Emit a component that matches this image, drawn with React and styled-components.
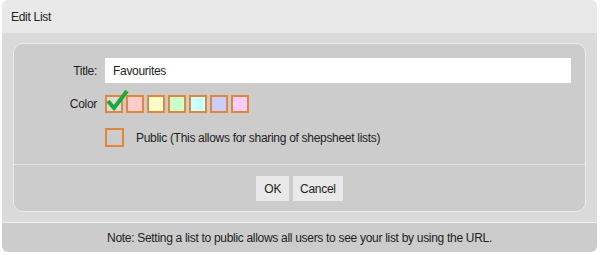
import React from "react";
import styled, { createGlobalStyle } from "styled-components";

const Global = createGlobalStyle`
  html, body { margin: 0; padding: 0; background: #ffffff; }
  body { font-family: "Liberation Sans", Arial, sans-serif; font-size: 12px; letter-spacing: -0.3px; color: #222; }
`;

const Dialog = styled.div`
  margin-left: 2px;
  width: 595px;
  display: flex;
  flex-direction: column;
  border-radius: 6px;
  overflow: hidden;
`;

const Header = styled.div`
  height: 33px;
  background: #e9e9e9;
  display: flex;
  align-items: center;
  padding-left: 9px;
  color: #222;
`;

const Body = styled.div`
  background: #dadada;
  padding: 10px 11px 10px 11px;
`;

const Panel = styled.div`
  background: #cccccc;
  border: 1px solid #ececec;
  border-radius: 10px;
  display: flex;
  flex-direction: column;
`;

const Form = styled.div`
  display: grid;
  grid-template-columns: 83px 1fr;
  column-gap: 8px;
  padding: 14px 14px 17px 0;
  align-items: center;
`;

const Label = styled.label`
  text-align: right;
  color: #222;
  margin-top: ${(p) => p.$mt || 0}px;
`;

const Input = styled.input`
  height: 25px;
  box-sizing: border-box;
  border: none;
  outline: none;
  background: #ffffff;
  padding: 0 8px;
  font-family: inherit;
  font-size: 12px;
  letter-spacing: inherit;
  color: #222;
`;

const Swatches = styled.div`
  position: relative;
  display: flex;
  gap: 3px;
  margin-top: ${(p) => p.$mt || 0}px;
`;

const Swatch = styled.div`
  width: 18px;
  height: 18px;
  box-sizing: border-box;
  border: 2px solid #e3863d;
  background: ${(p) => p.$c};
`;

const Check = styled.svg`
  position: absolute;
  left: 1px;
  top: -5px;
  width: 24px;
  height: 22px;
  overflow: visible;
`;

const PublicRow = styled.div`
  display: flex;
  align-items: center;
  gap: 12px;
  margin-top: 15px;
`;

const Box = styled.div`
  width: 19px;
  height: 19px;
  box-sizing: border-box;
  border: 2px solid #e3863d;
`;

const Separator = styled.div`
  height: 1px;
  background: #e2e2e2;
`;

const Buttons = styled.div`
  display: flex;
  justify-content: center;
  gap: 4px;
  padding: 11px 0 10px;
`;

const Button = styled.button`
  height: 25px;
  padding: 0 ${(p) => p.$px}px;
  border: none;
  background: #e9e9e9;
  font-family: inherit;
  font-size: 12px;
  letter-spacing: inherit;
  color: #222;
  cursor: pointer;
`;

const Footer = styled.div`
  border-top: 1px solid #efefef;
  background: #cccccc;
  height: 29px;
  display: flex;
  align-items: center;
  justify-content: center;
  color: #222;
`;

const colors = ["#dcdcdc", "#ffcccc", "#ffffcc", "#ccffcc", "#ccffff", "#ccccff", "#ffccff"];

export default function App() {
  return (
    <>
      <Global />
      <Dialog>
        <Header>Edit List</Header>
        <Body>
          <Panel>
            <Form>
              <Label>Title:</Label>
              <Input defaultValue="Favourites" />
              <Label $mt={12}>Color</Label>
              <Swatches $mt={12}>
                {colors.map((c) => (
                  <Swatch key={c} $c={c} />
                ))}
                <Check viewBox="0 0 24 22">
                  <path d="M2 11 L8 18 L21 1" fill="none" stroke="#1fa83a" strokeWidth="4" strokeLinecap="butt" strokeLinejoin="miter" />
                </Check>
              </Swatches>
              <span />
              <PublicRow>
                <Box />
                <span>Public (This allows for sharing of shepsheet lists)</span>
              </PublicRow>
            </Form>
            <Separator />
            <Buttons>
              <Button $px={8}>OK</Button>
              <Button $px={7}>Cancel</Button>
            </Buttons>
          </Panel>
        </Body>
        <Footer>Note: Setting a list to public allows all users to see your list by using the URL.</Footer>
      </Dialog>
    </>
  );
}
